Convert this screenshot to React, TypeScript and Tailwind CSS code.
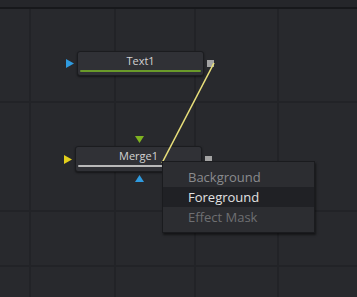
import React from "react";

const FONT = { fontFamily: '"Open Sans", "Noto Sans", sans-serif' } as const;

function Tri({ dir, color, className = "" }: { dir: "right" | "down" | "up"; color: string; className?: string }) {
  const side = dir === "right";
  const w = side ? 8 : 9;
  const h = side ? 9 : 7;
  const pts = side ? "0,0 8,4.5 0,9" : dir === "down" ? "0,0 9,0 4.5,7" : "4.5,0 9,7 0,7";
  return (
    <svg className={`shrink-0 ${className}`} width={w} height={h} viewBox={`0 0 ${w} ${h}`}>
      <polygon points={pts} fill={color} />
    </svg>
  );
}

function Node({
  label,
  bar,
  input,
  className,
  children,
}: {
  label: string;
  bar: string;
  input: string;
  className: string;
  children?: React.ReactNode;
}) {
  return (
    <div className={`absolute flex items-center ${className}`}>
      <Tri dir="right" color={input} />
      <div className="relative ml-[3px] flex h-full w-[127px] flex-col rounded-[3px] border border-[#1b1c1f] bg-[#303136] pt-[2px] shadow-[0_1px_2px_rgba(0,0,0,0.5)]">
        <div className="text-center text-[11px] leading-[14px] text-[#d2d2d2]">{label}</div>
        <div className={`mx-[2px] mt-[2px] h-[2px] rounded-full ${bar}`} />
        {children}
      </div>
      <div className="ml-[3px] h-[7px] w-[7px] shrink-0 bg-[#a3a3a3]" />
    </div>
  );
}

export default function App() {
  return (
    <div className="relative h-[297px] w-[357px] overflow-hidden bg-[#28292d]" style={FONT}>
      {/* grid */}
      <svg className="absolute inset-0" width={357} height={297}>
        {[30, 115, 195, 278].map((x) => (
          <line key={x} x1={x} y1={0} x2={x} y2={297} stroke="#222327" strokeWidth={2} />
        ))}
        {[102, 211, 266].map((y) => (
          <line key={y} x1={0} y1={y} x2={357} y2={y} stroke="#222327" strokeWidth={2} />
        ))}
      </svg>

      {/* top strip */}
      <div className="absolute inset-x-0 top-0 flex flex-col">
        <div className="h-[7px] bg-[#25262a]" />
        <div className="h-[2px] bg-[#17181b]" />
      </div>

      <Node label="Text1" bar="bg-[#6a9a2a]" input="#2f9be0" className="left-[66px] top-[51px] h-[25px]" />

      <Node label="Merge1" bar="bg-[#b9b9b9]" input="#e2cf1c" className="left-[64px] top-[146px] h-[26px]">
        <Tri dir="down" color="#7fb320" className="absolute left-[59px] top-[-11px]" />
        <Tri dir="up" color="#2f9be0" className="absolute left-[59px] top-[28px]" />
      </Node>

      {/* connection */}
      <svg className="absolute inset-0" width={357} height={297}>
        <line x1={214} y1={63} x2={162} y2={163} stroke="#e8df7a" strokeWidth={1.6} />
      </svg>

      {/* context menu */}
      <div className="absolute left-[162px] top-[161px] flex w-[153px] flex-col border border-[#1a1b1e] bg-[#2c2d31] py-[5px] text-[13px] leading-[20px] shadow-[1px_2px_2px_rgba(0,0,0,0.5)]">
        <div className="pl-[25px] text-[#8a8b8e]">Background</div>
        <div className="bg-[#202125] pl-[25px] text-[#e2e2e2]">Foreground</div>
        <div className="pl-[25px] text-[#6e6f72]">Effect Mask</div>
      </div>
    </div>
  );
}
